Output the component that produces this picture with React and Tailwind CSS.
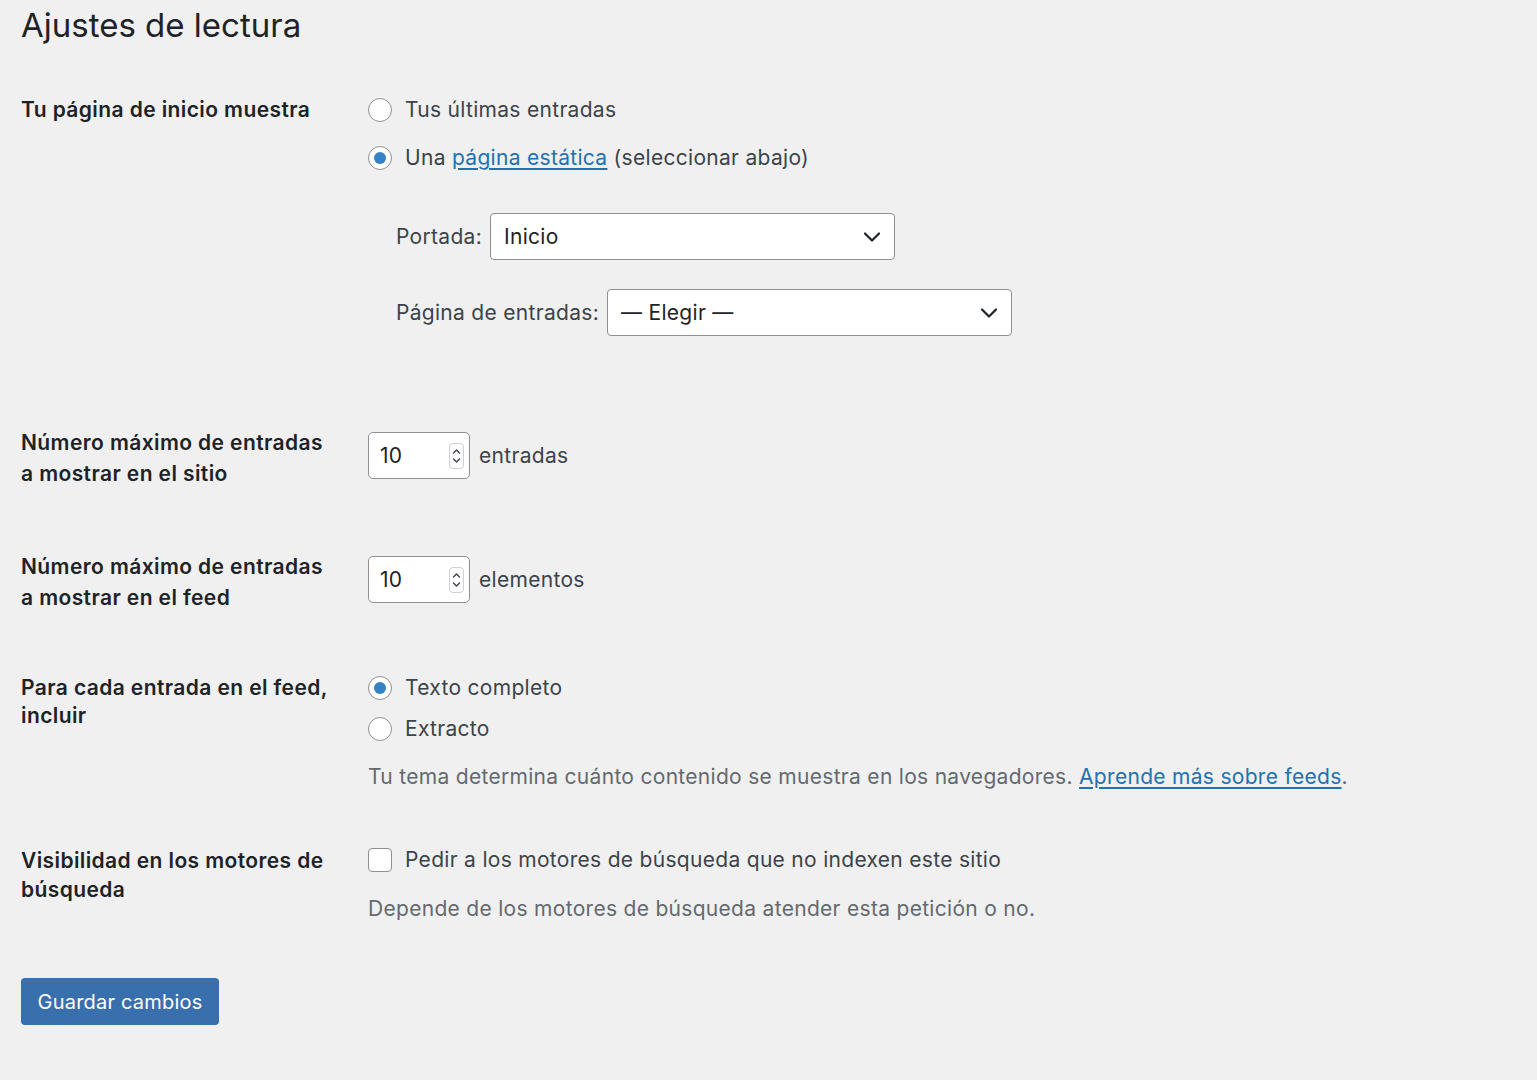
import React from "react";

const font = { fontFamily: "Inter, 'Noto Sans', sans-serif" };

function Radio({ checked }) {
  return (
    <span className="w-[24px] h-[24px] rounded-full border border-[#8c8f94] bg-white flex items-center justify-center shrink-0">
      {checked && <span className="w-[12px] h-[12px] rounded-full bg-[#3582c4]" />}
    </span>
  );
}

function Chevron() {
  return (
    <svg width="18" height="12" viewBox="0 0 18 12" fill="none">
      <path d="M2 2.5 L9 9.5 L16 2.5" stroke="#1d2327" strokeWidth="2.2" strokeLinecap="round" strokeLinejoin="round" />
    </svg>
  );
}

function Select({ value, width }) {
  return (
    <div className={`${width} h-[47px] bg-white border border-[#8c8f94] rounded-[4px] flex items-center justify-between pl-[13px] pr-[13px] text-[21px] tracking-[0.3px] text-[#1d2327]`}>
      <span>{value}</span>
      <Chevron />
    </div>
  );
}

function NumberInput() {
  return (
    <div className="w-[102px] h-[47px] bg-white border border-[#8c8f94] rounded-[5px] flex items-center justify-between pl-[11px] pr-[5px] text-[21px] text-[#1d2327]">
      <span>10</span>
      <span className="w-[15px] h-[26px] rounded-[4px] border border-[#d0d0d3] flex items-center justify-center">
        <svg width="9" height="18" viewBox="0 0 9 18" fill="none">
          <path d="M1.5 6 L4.5 3 L7.5 6" stroke="#3c434a" strokeWidth="1.4" strokeLinecap="round" strokeLinejoin="round" />
          <path d="M1.5 12 L4.5 15 L7.5 12" stroke="#3c434a" strokeWidth="1.4" strokeLinecap="round" strokeLinejoin="round" />
        </svg>
      </span>
    </div>
  );
}

const txt = "text-[21px] tracking-[0.3px] text-[#3c434a]";
const lbl = "w-[347px] shrink-0 text-[21px] tracking-[0.4px] font-semibold";

export default function App() {
  return (
    <div className="min-h-[1080px] w-full bg-[#f0f0f1] pl-[21px] text-[#1d2327]" style={font}>
      <h1 className="pt-[5px] text-[33px] leading-[41px] font-normal text-[#1d2327]">Ajustes de lectura</h1>

      {/* Row 1 */}
      <div className="flex mt-[50px]">
        <div className={`${lbl} leading-[28px]`}>Tu página de inicio muestra</div>
        <div className="flex flex-col">
          <label className={`flex items-center gap-[13px] h-[28px] ${txt}`}>
            <Radio /> <span>Tus últimas entradas</span>
          </label>
          <label className={`flex items-center gap-[13px] h-[28px] mt-[20px] ${txt}`}>
            <Radio checked />
            <span>
              Una <span className="text-[#2271b1] underline underline-offset-[3px]">página estática</span> (seleccionar abajo)
            </span>
          </label>
          <div className={`flex items-center gap-[8px] mt-[41px] ml-[28px] ${txt}`}>
            <span>Portada:</span>
            <Select value="Inicio" width="w-[405px]" />
          </div>
          <div className={`flex items-center gap-[8px] mt-[29px] ml-[28px] ${txt}`}>
            <span>Página de entradas:</span>
            <Select value="— Elegir —" width="w-[405px]" />
          </div>
        </div>
      </div>

      {/* Row 2 */}
      <div className="flex mt-[91px]">
        <div className={`${lbl} leading-[31px]`}>
          Número máximo de entradas<br />a mostrar en el sitio
        </div>
        <div className={`flex items-center gap-[9px] mt-[5px] h-[47px] ${txt}`}>
          <NumberInput />
          <span>entradas</span>
        </div>
      </div>

      {/* Row 3 */}
      <div className="flex mt-[62px]">
        <div className={`${lbl} leading-[31px]`}>
          Número máximo de entradas<br />a mostrar en el feed
        </div>
        <div className={`flex items-center gap-[9px] mt-[5px] h-[47px] ${txt}`}>
          <NumberInput />
          <span>elementos</span>
        </div>
      </div>

      {/* Row 4 */}
      <div className="flex mt-[61px]">
        <div className={`${lbl} leading-[28px]`}>
          Para cada entrada en el feed,<br />incluir
        </div>
        <div className="flex flex-col">
          <label className={`flex items-center gap-[13px] h-[28px] ${txt}`}>
            <Radio checked /> <span>Texto completo</span>
          </label>
          <label className={`flex items-center gap-[13px] h-[28px] mt-[13px] ${txt}`}>
            <Radio /> <span>Extracto</span>
          </label>
          <p className="mt-[20px] h-[28px] leading-[28px] text-[21px] tracking-[0.3px] text-[#646970]">
            Tu tema determina cuánto contenido se muestra en los navegadores.{" "}
            <span className="text-[#2271b1] underline underline-offset-[3px]">Aprende más sobre feeds</span>.
          </p>
        </div>
      </div>

      {/* Row 5 */}
      <div className="flex mt-[55px]">
        <div className={`${lbl} leading-[29px]`}>
          Visibilidad en los motores de<br />búsqueda
        </div>
        <div className="flex flex-col">
          <label className={`flex items-center gap-[13px] h-[28px] ${txt}`}>
            <span className="w-[24px] h-[24px] rounded-[4px] border border-[#8c8f94] bg-white shrink-0" />
            <span>Pedir a los motores de búsqueda que no indexen este sitio</span>
          </label>
          <p className="mt-[21px] h-[28px] leading-[28px] text-[21px] tracking-[0.3px] text-[#646970]">
            Depende de los motores de búsqueda atender esta petición o no.
          </p>
        </div>
      </div>

      <button className="mt-[55px] w-[198px] h-[47px] rounded-[4px] bg-[#3a6fad] text-white text-[20px] tracking-[0.2px] flex items-center justify-center">
        Guardar cambios
      </button>
    </div>
  );
}
